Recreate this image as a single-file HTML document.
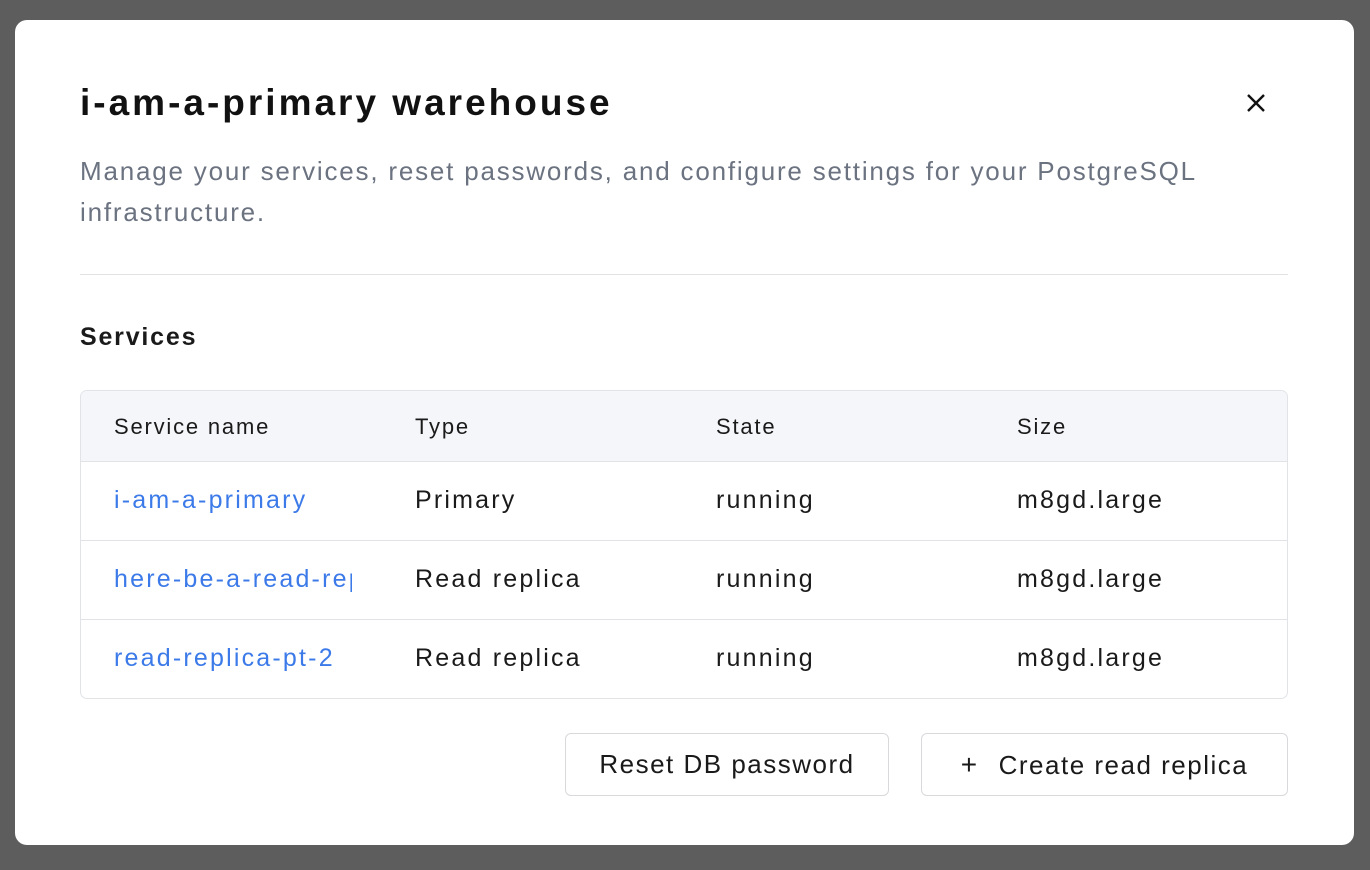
<!DOCTYPE html>
<html><head><style>
*{margin:0;padding:0;box-sizing:border-box}
body{width:1370px;height:870px;background:#5d5d5d;font-family:"Liberation Sans",sans-serif;position:relative;overflow:hidden}
.m{position:absolute;left:15px;top:20px;width:1339px;height:825px;background:#fff;border-radius:12px}
.a{position:absolute}
h1{position:absolute;left:65px;top:62px;font-size:37px;font-weight:bold;color:#111;letter-spacing:3px;white-space:nowrap}
.d{left:65px;top:131px;font-size:26px;line-height:41px;color:#6b7280;width:1140px;letter-spacing:1.8px}
.hr{left:65px;top:254px;width:1208px;height:1px;background:#e2e2e2}
.s{left:65px;top:303px;font-size:25px;font-weight:bold;color:#1a1a1a;letter-spacing:1.8px}
.t{left:65px;top:370px;width:1208px;height:309px;border:1px solid #e2e3e6;border-radius:7px;overflow:hidden}
.r{position:absolute;left:0;width:100%;height:79px;border-top:1px solid #e2e3e6;font-size:25px;color:#1a1a1a;letter-spacing:2.2px}
.r span{position:absolute;top:24px;white-space:nowrap}
.h{top:0;height:70px;border:none;background:#f5f6fa;font-size:22px;letter-spacing:1.8px}
.h span{top:23px}
.l{color:#3b7ae8;overflow:hidden;width:238px}
.b{top:713px;height:63px;border:1px solid #d9d9dc;border-radius:6px;font-size:26px;color:#1a1a1a;text-align:center;line-height:61px;letter-spacing:1.5px;white-space:nowrap}
</style></head><body>
<div class="m">
<h1>i-am-a-primary warehouse</h1>
<svg class="a" style="left:1230px;top:72px" width="22" height="22" viewBox="0 0 22 22"><path d="M3 3L19 19M19 3L3 19" stroke="#111" stroke-width="2.4"/></svg>
<div class="a d">Manage your services, reset passwords, and configure settings for your PostgreSQL infrastructure.</div>
<div class="a hr"></div>
<div class="a s">Services</div>
<div class="a t">
<div class="r h"><span style="left:33px">Service name</span><span style="left:334px">Type</span><span style="left:635px">State</span><span style="left:936px">Size</span></div>
<div class="r" style="top:70px"><span class="l" style="left:33px">i-am-a-primary</span><span style="left:334px">Primary</span><span style="left:635px">running</span><span style="left:936px">m8gd.large</span></div>
<div class="r" style="top:149px"><span class="l" style="left:33px">here-be-a-read-replica</span><span style="left:334px">Read replica</span><span style="left:635px">running</span><span style="left:936px">m8gd.large</span></div>
<div class="r" style="top:228px"><span class="l" style="left:33px">read-replica-pt-2</span><span style="left:334px">Read replica</span><span style="left:635px">running</span><span style="left:936px">m8gd.large</span></div>
</div>
<div class="a b" style="left:550px;width:324px">Reset DB password</div>
<div class="a b" style="left:906px;width:367px"><span style="font-size:28px;margin-right:20px">+</span>Create read replica</div>
</div>
</body></html>
